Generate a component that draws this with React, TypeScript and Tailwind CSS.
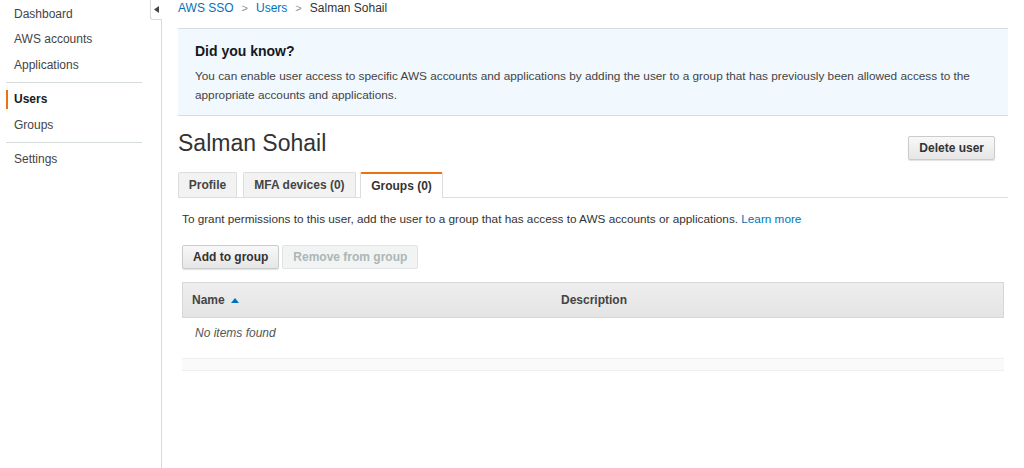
import React from "react";

function NavItem({ label, active = false }: { label: string; active?: boolean }) {
  return (
    <div className="relative h-[25.5px] flex items-center pl-[14px]">
      {active && <span className="absolute left-[6px] top-[3px] bottom-[3px] w-[2px] bg-[#ec7211]" />}
      <span className={active ? "font-bold text-[#16191f]" : "text-[#444]"}>{label}</span>
    </div>
  );
}

function Sidebar() {
  return (
    <aside className="relative w-[162px] shrink-0 border-r border-[#d5dbdb] min-h-[468px] pt-[1px] text-[12px]">
      <NavItem label="Dashboard" />
      <NavItem label="AWS accounts" />
      <NavItem label="Applications" />
      <div className="mx-[6px] mr-[19px] my-[4px] border-t border-[#d5dbdb]" />
      <NavItem label="Users" active />
      <NavItem label="Groups" />
      <div className="mx-[6px] mr-[19px] my-[4px] border-t border-[#d5dbdb]" />
      <NavItem label="Settings" />
      <div className="absolute right-[-1px] top-0 w-[12px] h-[20px] border-l border-b border-[#d5dbdb] rounded-bl-[3px] bg-white flex items-center justify-center">
        <svg width="5" height="7" viewBox="0 0 5 7">
          <path d="M5 0 L0 3.5 L5 7 Z" fill="#444" />
        </svg>
      </div>
    </aside>
  );
}

function GrayButton({ children, disabled = false }: { children: React.ReactNode; disabled?: boolean }) {
  return (
    <button
      className={
        "h-[24px] px-[10px] rounded-[2px] border text-[12px] font-bold " +
        (disabled
          ? "border-[#e1e4e4] bg-[#f2f3f3] text-[#aab7b8]"
          : "border-[#c8cccc] bg-gradient-to-b from-[#f8f8f8] to-[#e6e6e6] text-[#333] shadow-[0_1px_1px_rgba(0,0,0,0.12)]")
      }
    >
      {children}
    </button>
  );
}

export default function App() {
  return (
    <div className="flex w-[1024px] h-[468px] overflow-hidden bg-white font-['Liberation_Sans',Arial,sans-serif] text-[#333]">
      <Sidebar />
      <main className="flex-1 pl-[16px] pr-[16px]">
        <div className="h-[28px] pt-[1px] flex items-start gap-[8px] text-[12px] leading-[14px]">
          <span className="text-[#0073bb]">AWS SSO</span>
          <span className="text-[#879596] text-[11px]">&gt;</span>
          <span className="text-[#0073bb]">Users</span>
          <span className="text-[#879596] text-[11px]">&gt;</span>
          <span className="text-[#333]">Salman Sohail</span>
        </div>

        <section className="h-[88px] bg-[#f1f8fe] border-t border-b border-[#d9dcdc] px-[17px] pt-[13px]">
          <h2 className="text-[14px] font-bold text-[#16191f] leading-[18px]">Did you know?</h2>
          <p className="mt-[7px] text-[11.8px] leading-[19px] text-[#444]">
            You can enable user access to specific AWS accounts and applications by adding the user to a group that has previously been allowed access to the appropriate accounts and applications.
          </p>
        </section>

        <div className="flex items-start justify-between pt-[13px]">
          <h1 className="text-[23px] leading-[28px] text-[#333]">Salman Sohail</h1>
          <div className="pt-[6px] pr-[13px]">
            <GrayButton>Delete user</GrayButton>
          </div>
        </div>

        <div className="mt-[12px] flex items-end border-b border-[#dcdede] h-[26px] text-[12px] font-bold">
          <div className="h-[25px] w-[59px] flex items-center justify-center bg-[#f2f2f2] border border-b-0 border-[#dcdede] rounded-t-[2px] text-[#444]">Profile</div>
          <div className="ml-[6px] h-[25px] w-[113px] flex items-center justify-center bg-[#f2f2f2] border border-b-0 border-[#dcdede] rounded-t-[2px] text-[#444]">MFA devices (0)</div>
          <div className="ml-[4px] h-[26px] w-[83px] -mb-[1px] flex items-center justify-center bg-white border border-b-0 border-[#dcdede] border-t-2 border-t-[#ec7211] rounded-t-[2px] text-[#333]">Groups (0)</div>
        </div>

        <div className="pl-[4px] pr-[4px]">
          <p className="mt-[14px] text-[11.75px] leading-[14px] text-[#333]">
            To grant permissions to this user, add the user to a group that has access to AWS accounts or applications. <span className="text-[#0073bb]">Learn more</span>
          </p>

          <div className="mt-[19px] flex gap-[3px]">
            <GrayButton>Add to group</GrayButton>
            <GrayButton disabled>Remove from group</GrayButton>
          </div>

          <div className="mt-[13px]">
            <div className="h-[36px] flex items-center border border-[#d5d8d8] bg-gradient-to-b from-[#eeeeee] to-[#e4e4e4] text-[12px] font-bold text-[#444]">
              <div className="w-[378px] pl-[9px] flex items-center gap-[6px]">
                Name
                <svg width="8" height="5" viewBox="0 0 8 5">
                  <path d="M0 5 L4 0 L8 5 Z" fill="#0073bb" />
                </svg>
              </div>
              <div>Description</div>
            </div>
            <div className="h-[40px] pt-[8px] pl-[13px] text-[12px] leading-[14px] italic text-[#555]">No items found</div>
            <div className="h-[13px] bg-[#fafafa] border-t border-b border-[#eeeeee]" />
          </div>
        </div>
      </main>
    </div>
  );
}
